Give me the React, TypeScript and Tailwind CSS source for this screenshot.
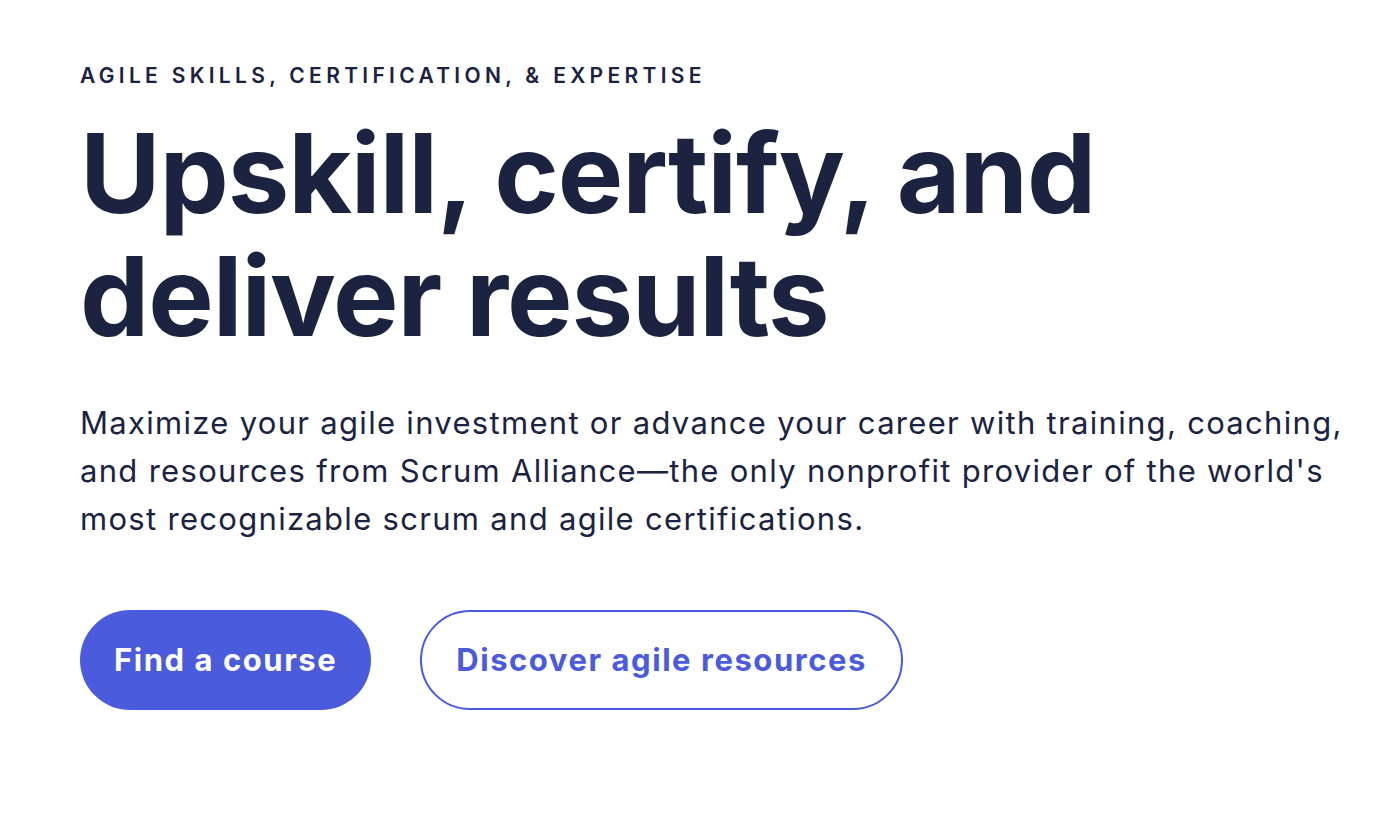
const App = () => {
  return (
    <div className="min-h-screen bg-white font-['Inter',sans-serif] text-[#1c2341]">
      <section className="pl-[80px] pr-[4px] pt-[62px]">
        <p className="text-[21px] font-semibold uppercase leading-[28px] tracking-[0.205em]">
          Agile skills, certification, &amp; expertise
        </p>

        <h1 className="mt-[22px] text-[110px] font-bold leading-[123px] tracking-[-0.01em]">
          Upskill, certify, and
          <br />
          deliver results
        </h1>

        <p className="mt-[41px] max-w-[1285px] text-[31px] leading-[48px] tracking-[0.042em]">
          Maximize your agile investment or advance your career with training, coaching, and resources
          from Scrum Alliance—the only nonprofit provider of the world's most recognizable scrum and
          agile certifications.
        </p>

        {/* primary + outline CTA */}
        <div className="mt-[67px] flex items-center gap-[49px]">
          <button className="h-[100px] rounded-full bg-[#4a5bdb] px-[34px] text-[31px] font-bold tracking-[0.05em] text-white">
            Find a course
          </button>
          <button className="h-[100px] rounded-full border-2 border-[#4a5bdb] bg-white px-[34px] text-[31px] font-bold tracking-[0.05em] text-[#4a5bdb]">
            Discover agile resources
          </button>
        </div>
      </section>
    </div>
  )
}

export default App
